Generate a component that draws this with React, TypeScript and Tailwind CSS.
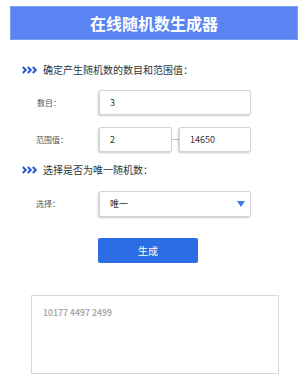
import React from 'react';

const font = { fontFamily: '"Noto Sans CJK SC", "Noto Sans", sans-serif' };

function Arrows() {
    return (
        <svg width="15" height="8" viewBox="0 0 15 8" className="shrink-0">
            {[0, 5, 10].map((x) => (
                <path key={x} d={`M${x + 0.8} 1 L${x + 3.8} 4 L${x + 0.8} 7`} fill="none" stroke="#2557d6" strokeWidth="2" />
            ))}
        </svg>
    );
}

function Box({ children, className = '' }: { children?: React.ReactNode; className?: string }) {
    return (
        <div className={`h-[25px] bg-white border border-[#d4d4d4] rounded-[2px] shadow-[-1px_1px_2px_rgba(0,0,0,0.22)] flex items-center pl-[10px] text-[9px] text-[#333] ${className}`}>
            {children}
        </div>
    );
}

export default function App() {
    return (
        <div className="w-[308px] h-[382px] bg-white overflow-hidden" style={font}>
            {/* header */}
            <div className="mx-[10px] mt-[6px] h-[34px] bg-[#5b84f3] border border-[#7d9df5] flex items-center justify-center">
                <span className="text-white text-[16px] font-bold leading-none">在线随机数生成器</span>
            </div>

            {/* section 1 */}
            <div className="mt-[23px] ml-[22px] h-[14px] flex items-center gap-[6px]">
                <Arrows />
                <span className="text-[10px] text-[#333] leading-none">确定产生随机数的数目和范围值：</span>
            </div>

            <div className="mt-[13px] flex items-center">
                <span className="w-[99px] pl-[37px] text-[8px] text-[#555]">数目：</span>
                <Box className="w-[152px]">3</Box>
            </div>

            <div className="mt-[12px] flex items-center">
                <span className="w-[99px] pl-[36px] text-[8px] text-[#555]">范围值：</span>
                <Box className="w-[73px]">2</Box>
                <div className="w-[7px] h-px bg-[#bbb]" />
                <Box className="w-[72px]">14650</Box>
            </div>

            {/* section 2 */}
            <div className="mt-[11px] ml-[22px] h-[14px] flex items-center gap-[6px]">
                <Arrows />
                <span className="text-[10px] text-[#333] leading-none">选择是否为唯一随机数：</span>
            </div>

            <div className="mt-[14px] flex items-center">
                <span className="w-[99px] pl-[36px] text-[8px] text-[#555]">选择：</span>
                <Box className="w-[152px] h-[26px] justify-between pr-[5px]">
                    <span>唯一</span>
                    <svg width="8" height="6" viewBox="0 0 8 6">
                        <path d="M0 0 H8 L4 6 Z" fill="#3f7de6" />
                    </svg>
                </Box>
            </div>

            {/* button */}
            <div className="mt-[21px] ml-[98px] w-[100px] h-[25px] bg-[#2b6de5] rounded-[2px] flex items-center justify-center">
                <span className="text-white text-[10px]">生成</span>
            </div>

            {/* output */}
            <div className="mt-[32px] ml-[31px] w-[248px] h-[79px] border border-[#d9d9d9] pt-[12px] pl-[11px]">
                <div className="text-[8.5px] leading-none font-bold text-[#aaa]">10177 4497 2499</div>
            </div>
        </div>
    );
}
